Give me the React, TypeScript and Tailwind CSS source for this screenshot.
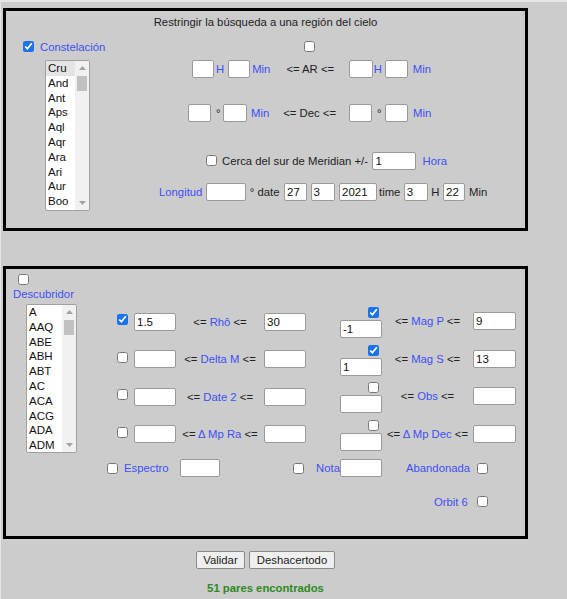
import React from "react";

const BLUE = "text-[#3d4ff5]";

function Cb({ checked = false, className = "" }: { checked?: boolean; className?: string }) {
  return (
    <input
      type="checkbox"
      defaultChecked={checked}
      className={"m-0 w-[11px] h-[11px] shrink-0 accent-[#1a73e8] " + className}
    />
  );
}

function Inp({ value = "", className = "" }: { value?: string; className?: string }) {
  return (
    <input
      type="text"
      defaultValue={value}
      className={
        "h-[18px] shrink-0 bg-white border border-[#9a9a9a] rounded-[2px] px-[2px] py-0 text-[11.5px] leading-[16px] text-[#111] outline-none " +
        className
      }
    />
  );
}

function ListBox({ items, selected = false, className = "" }: { items: string[]; selected?: boolean; className?: string }) {
  return (
    <div className={"flex shrink-0 bg-white border border-[#a0a0a0] rounded-[2px] overflow-hidden " + className}>
      <div className="flex-1 flex flex-col">
        {items.map((it, i) => (
          <div
            key={it}
            className={
              "h-[14.8px] leading-[14.8px] pl-[2px] text-[11.5px] text-[#111] " +
              (i === 0 && selected ? "bg-[#e4e4e4]" : "")
            }
          >
            {it}
          </div>
        ))}
      </div>
      <div className="w-[14px] bg-[#f1f1f1] flex flex-col">
        <div className="h-[14px] flex items-center justify-center">
          <svg width="7" height="4" viewBox="0 0 7 4">
            <polygon points="3.5,0 7,4 0,4" fill="#a3a3a3" />
          </svg>
        </div>
        <div className="mt-[1px] mx-[2px] h-[15px] bg-[#c1c1c1]" />
        <div className="flex-1" />
        <div className="h-[14px] flex items-center justify-center">
          <svg width="7" height="4" viewBox="0 0 7 4">
            <polygon points="0,0 7,0 3.5,4" fill="#a3a3a3" />
          </svg>
        </div>
      </div>
    </div>
  );
}

function Label({ pre = "<= ", name, post = " <=" }: { pre?: string; name: string; post?: string }) {
  return (
    <span className="whitespace-pre">
      {pre}
      <span className={BLUE}>{name}</span>
      {post}
    </span>
  );
}

export default function App() {
  return (
    <div className="w-[567px] h-[599px] bg-[#cccccc] border-t-2 border-l border-[#e6e6e6] font-['Liberation_Sans',Arial,sans-serif] text-[11.3px] leading-[14px] text-[#222]">
      {/* Box 1 */}
      <div className="ml-[2px] mt-[6px] w-[525px] h-[223px] border-[3px] border-black flex flex-col">
        <div className="h-[22px] flex items-center justify-center">
          Restringir la búsqueda a una región del cielo
        </div>
        <div className="flex">
          <div className="w-[140px] shrink-0 flex flex-col">
            <div className="h-[20px] mt-[3.5px] flex items-center pl-[17px]">
              <Cb checked />
              <span className={"ml-[6px] " + BLUE}>Constelación</span>
            </div>
            <ListBox
              selected
              className="ml-[39px] mt-[3.5px] w-[45px] h-[151px]"
              items={["Cru", "And", "Ant", "Aps", "Aql", "Aqr", "Ara", "Ari", "Aur", "Boo"]}
            />
          </div>
          <div className="flex flex-col">
            <div className="h-[20px] mt-[3.5px] flex items-center pl-[158px]">
              <Cb />
            </div>
            <div className="h-[18px] mt-[3.5px] flex items-center pl-[46px] whitespace-pre">
              <Inp className="w-[22px]" />
              <span className={"ml-[2px] " + BLUE}>H</span>
              <Inp className="ml-[4px] w-[22px]" />
              <span className={"ml-[2px] " + BLUE}>Min</span>
              <span className="ml-[16px]">{"<= AR <="}</span>
              <Inp className="ml-[14.5px] w-[24px]" />
              <span className={"ml-[1px] " + BLUE}>H</span>
              <Inp className="ml-[3px] w-[23px]" />
              <span className={"ml-[5px] " + BLUE}>Min</span>
            </div>
            <div className="h-[18px] mt-[26px] flex items-center pl-[42px] whitespace-pre">
              <Inp className="w-[23px]" />
              <span className="ml-[5px]">°</span>
              <Inp className="ml-[2.5px] w-[24px]" />
              <span className={"ml-[4px] " + BLUE}>Min</span>
              <span className="ml-[14px]">{"<= Dec <="}</span>
              <Inp className="ml-[13px] w-[23px]" />
              <span className="ml-[5px]">°</span>
              <Inp className="ml-[3.5px] w-[23px]" />
              <span className={"ml-[5px] " + BLUE}>Min</span>
            </div>
            <div className="h-[18px] mt-[29.5px] flex items-center pl-[60px] whitespace-pre">
              <Cb />
              <span className="ml-[5px]">Cerca del sur de Meridian +/-</span>
              <Inp value="1" className="ml-[4.5px] w-[44px]" />
              <span className={"ml-[6px] " + BLUE}>Hora</span>
            </div>
            <div className="h-[18px] mt-[13.5px] flex items-center pl-[13px] whitespace-pre">
              <span className={BLUE}>Longitud</span>
              <Inp className="ml-[3.5px] w-[40px]" />
              <span className="ml-[4px]">° date</span>
              <Inp value="27" className="ml-[4.5px] w-[23px]" />
              <Inp value="3" className="ml-[3.5px] w-[24px]" />
              <Inp value="2021" className="ml-[4.5px] w-[38px]" />
              <span className="ml-[2px]">time</span>
              <Inp value="3" className="ml-[3.5px] w-[24px]" />
              <span className="ml-[3.5px]">H</span>
              <Inp value="22" className="ml-[3.5px] w-[22px]" />
              <span className="ml-[4px]">Min</span>
            </div>
          </div>
        </div>
      </div>

      {/* Box 2 */}
      <div className="ml-[2px] mt-[35px] w-[525px] h-[273px] border-[3px] border-black flex">
        <div className="w-[100px] shrink-0 flex flex-col">
          <Cb className="mt-[5px] ml-[12px]" />
          <div className={"mt-[2px] ml-[7px] h-[14px] leading-[14px] " + BLUE}>Descubridor</div>
          <ListBox
            className="ml-[20px] mt-[3px] w-[51px] h-[149px]"
            items={["A", "AAQ", "ABE", "ABH", "ABT", "AC", "ACA", "ACG", "ADA", "ADM"]}
          />
        </div>
        <div className="flex flex-col">
          <div className="mt-[38px] grid grid-cols-[28px_42px_88px_42px_76px_91px_43px] auto-rows-[31px] gap-y-[6.5px]">
            {[
              { lc: true, lv: "1.5", ln: "Rhô", rv: "30", rc: true, rv2: "-1", rn: "Mag P", rv3: "9" },
              { lc: false, lv: "", ln: "Delta M", rv: "", rc: true, rv2: "1", rn: "Mag S", rv3: "13" },
              { lc: false, lv: "", ln: "Date 2", rv: "", rc: false, rv2: "", rn: "Obs", rv3: "" },
              { lc: false, lv: "", ln: "Δ Mp Ra", rv: "", rc: false, rv2: "", rn: "Δ Mp Dec", rv3: "" },
            ].map((r, i) => (
              <React.Fragment key={i}>
                <div className="flex items-center pb-[2px]">
                  <Cb checked={r.lc} className="ml-[11px] mb-[4px]" />
                </div>
                <div className="flex items-center pb-[2px]">
                  <Inp value={r.lv} className="w-[42px]" />
                </div>
                <div className="flex items-center justify-center pb-[2px]">
                  <Label name={r.ln} />
                </div>
                <div className="flex items-center pb-[2px]">
                  <Inp value={r.rv} className="w-[42px]" />
                </div>
                <div className="flex flex-col items-end">
                  <Cb checked={r.rc} className="mr-[3px]" />
                  <Inp value={r.rv2} className="mt-[2px] w-[42px]" />
                </div>
                <div className="flex items-center justify-center pb-[3px]">
                  <Label name={r.rn} />
                </div>
                <div className="flex items-center pb-[3px]">
                  <Inp value={r.rv3} className="w-[43px]" />
                </div>
              </React.Fragment>
            ))}
          </div>
          <div className="mt-[8.5px] h-[18px] flex items-center whitespace-pre">
            <Cb className="ml-[1px]" />
            <span className={"ml-[6px] " + BLUE}>Espectro</span>
            <Inp className="ml-[11.5px] w-[40px]" />
            <Cb className="ml-[73px]" />
            <span className={"ml-[12px] " + BLUE}>Nota</span>
            <Inp className="ml-0 w-[42px]" />
            <span className={"ml-[24px] " + BLUE}>Abandonada</span>
            <Cb className="ml-[7px]" />
          </div>
          <div className="mt-[15.5px] h-[18px] flex items-center whitespace-pre">
            <span className={"ml-[328px] " + BLUE}>Orbit 6</span>
            <Cb className="ml-[9px]" />
          </div>
        </div>
      </div>

      {/* Bottom */}
      <div className="ml-[2px] w-[525px] flex flex-col items-center">
        <div className="mt-[12px] flex gap-[4px]">
          <button className="w-[49px] h-[18px] bg-[#efefef] border border-[#8a8a8a] rounded-[2px] text-[11.3px] leading-[16px] text-[#222]">
            Validar
          </button>
          <button className="w-[86px] h-[18px] bg-[#efefef] border border-[#8a8a8a] rounded-[2px] text-[11.3px] leading-[16px] text-[#222]">
            Deshacertodo
          </button>
        </div>
        <div className="mt-[12px] h-[14px] leading-[14px] font-bold text-[#2d8a1e]">51 pares encontrados</div>
      </div>
    </div>
  );
}
